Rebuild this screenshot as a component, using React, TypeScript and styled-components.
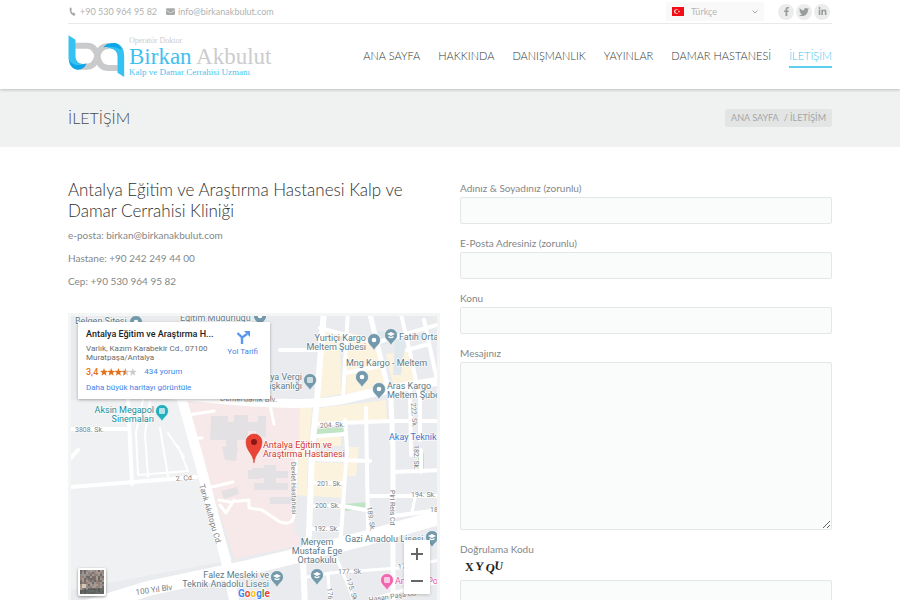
import React from "react";
import styled, { createGlobalStyle } from "styled-components";
import { FaPhoneAlt, FaEnvelope, FaFacebookF, FaTwitter, FaLinkedinIn } from "react-icons/fa";

const GlobalStyle = createGlobalStyle`
  * { box-sizing: border-box; }
  body {
    margin: 0;
    background: #fff;
    color: #848787;
    font-family: Lato, "Open Sans", sans-serif;
    font-size: 10px;
  }
  h1, h2, p { margin: 0; font-weight: 400; }
  a { color: inherit; text-decoration: none; }
`;

const Container = styled.div`
  max-width: 1300px;
  margin: 0 auto;
  padding: 0 68px;
`;

const Header = styled.header`
  position: relative;
  background: #fff;
  box-shadow: 0 1px 3px rgba(0, 0, 0, 0.22);
`;

const TopBar = styled.div`
  display: flex;
  align-items: center;
  height: 24px;
  border-bottom: 1px solid #e8e9e9;
  color: #b0b2b2;
  font-size: 9px;
`;

const Contact = styled.a`
  display: flex;
  align-items: center;
  gap: 3px;
  margin-right: 9px;
  svg { color: #a8aaaa; }
`;

const Language = styled.label`
  display: flex;
  align-items: center;
  gap: 7px;
  width: 98px;
  height: 19px;
  margin-left: auto;
  padding: 0 6px;
  background: #f9f9f9;
`;

const LanguageSelect = styled.select`
  flex: 1;
  appearance: none;
  border: 0;
  padding: 0;
  background: none;
  color: #b4b6b6;
  font: inherit;
`;

const Socials = styled.div`
  display: flex;
  gap: 2px;
  margin: 0 2px 0 14px;
`;

const SocialLink = styled.a`
  display: flex;
  align-items: center;
  justify-content: center;
  width: 16px;
  height: 16px;
  border-radius: 50%;
  background: #ebecec;
  color: #9a9d9d;
`;

const MainBar = styled.div`
  display: flex;
  align-items: center;
  justify-content: space-between;
  height: 65px;
`;

const Brand = styled.a`
  display: flex;
  align-items: center;
  gap: 4px;
  font-family: "Liberation Serif", serif;
`;

const BrandText = styled.span`
  display: flex;
  flex-direction: column;
  color: #cbccce;
`;

const BrandSmall = styled.span`
  font-size: 8px;
  line-height: 8px;
`;

const BrandName = styled.span`
  font-size: 23px;
  line-height: 23px;
  b { color: #3fc1ef; font-weight: 400; }
`;

const BrandTag = styled.span`
  color: #49c4f0;
  font-size: 9px;
  line-height: 9px;
`;

const Nav = styled.nav`
  display: flex;
  gap: 18px;
  font-size: 11px;
  font-weight: 300;
`;

const NavLink = styled.a<{ $active?: boolean }>`
  border-bottom: 2px solid ${(p) => (p.$active ? "#5fcdf0" : "transparent")};
  color: ${(p) => (p.$active ? "#45c6ee" : "#333636")};
  line-height: 20px;
`;

const TitleBand = styled.div`
  background: #f0f2f2;
`;

const TitleRow = styled.div`
  display: flex;
  align-items: center;
  justify-content: space-between;
  height: 58px;
`;

const PageTitle = styled.h1`
  color: #484b4b;
  font-size: 16px;
  font-weight: 300;
  line-height: 20px;
  padding-bottom: 1px;
`;

const Crumbs = styled.nav`
  display: flex;
  gap: 5px;
  padding: 0 6px;
  border-radius: 2px;
  background: #e3e5e5;
  color: #a3a6a6;
  font-size: 9px;
  line-height: 18px;
`;

const Columns = styled.main`
  display: grid;
  grid-template-columns: 1fr 1fr;
  gap: 20px;
  padding: 32px 0;
`;

const Heading = styled.h2`
  margin-bottom: 3px;
  color: #2e3232;
  font-size: 17px;
  font-weight: 300;
  line-height: 21px;
`;

const Line = styled.p`
  line-height: 23px;
`;

const MapFrame = styled.div`
  position: relative;
  height: 292px;
  margin-top: 20px;
  border: 3px solid #f4f5f5;
  overflow: hidden;
  font-family: Roboto, sans-serif;
`;

const MapDrawing = styled.svg`
  display: block;
  width: 100%;
  height: 100%;
  font-family: Roboto, sans-serif;
`;

const PlaceCard = styled.div`
  position: absolute;
  top: 6px;
  left: 7px;
  display: flex;
  justify-content: space-between;
  width: 192px;
  height: 77px;
  padding: 6px 12px 0 8px;
  background: #fff;
  box-shadow: 0 1px 3px rgba(0, 0, 0, 0.3);
  color: #6b6b6b;
  font-size: 8px;
  line-height: 9px;
`;

const PlaceName = styled.p`
  margin-bottom: 4px;
  color: #222;
  font-size: 9px;
  font-weight: 500;
  line-height: 12px;
  white-space: nowrap;
`;

const Rating = styled.p`
  display: flex;
  align-items: center;
  gap: 2px;
  margin: 5px 0 6px;
  color: #e7711b;
  font-size: 9px;
  font-weight: 500;
  line-height: 10px;
`;

const MapLink = styled.a`
  color: #4285e8;
  font-size: 8px;
  font-weight: 400;
`;

const ReviewLink = styled(MapLink)`
  margin-left: 5px;
`;

const Directions = styled(MapLink)`
  display: flex;
  flex-direction: column;
  align-items: center;
  gap: 3px;
  padding-top: 3px;
  white-space: nowrap;
`;

const ZoomControls = styled.div`
  position: absolute;
  right: 7px;
  bottom: 8px;
  width: 26px;
  background: #fff;
  box-shadow: 0 1px 3px rgba(0, 0, 0, 0.2);
`;

const ZoomButton = styled.button`
  display: flex;
  align-items: center;
  justify-content: center;
  width: 26px;
  height: 27px;
  padding: 0;
  border: 0;
  background: none;
`;

const Satellite = styled.button`
  position: absolute;
  left: 7px;
  bottom: 6px;
  width: 28px;
  height: 28px;
  padding: 0;
  border: 2px solid #fff;
  border-radius: 2px;
  background: #8a8380;
  box-shadow: 0 1px 3px rgba(0, 0, 0, 0.4);
  svg { display: block; width: 100%; height: 100%; }
`;

const Form = styled.form`
  display: flex;
  flex-direction: column;
  gap: 11px;
  padding-top: 1px;
`;

const Field = styled.div`
  display: flex;
  flex-direction: column;
`;

const Label = styled.label`
  line-height: 17px;
`;

const Input = styled.input`
  width: 100%;
  height: 27px;
  padding: 0 8px;
  border: 1px solid #e4e7e7;
  border-radius: 2px;
  background: #fafcfb;
  font: inherit;
`;

const TextArea = styled.textarea`
  width: 100%;
  height: 168px;
  padding: 8px;
  border: 1px solid #e4e7e7;
  border-radius: 2px;
  background: #fafcfb;
  font: inherit;
`;

const captchaLetters = [
  { ch: "X", x: 5, y: 13, r: 0 },
  { ch: "Y", x: 15, y: 12, r: 3 },
  { ch: "Q", x: 25, y: 13, r: 10 },
  { ch: "U", x: 34, y: 11, r: 8 },
];

const menu = ["ANA SAYFA", "HAKKINDA", "DANIŞMANLIK", "YAYINLAR", "DAMAR HASTANESİ", "İLETİŞİM"];

const Logo = () => (
  <svg width="57" height="43" viewBox="25 105 170 129" fill="none">
    <path d="M46 137H82C102 137 110 154 113 170C116 188 124 204 145 204H174" stroke="#c9cacc" strokeWidth="18" />
    <path d="M58 200H80C100 200 108 186 112 170C116 152 126 138 146 138" stroke="#c9cacc" strokeWidth="18" />
    <path d="M26 106L47 119V168C47 186 60 193 76 193C70 204 60 209 50 208C34 205 26 190 26 170Z" fill="#35c2f3" />
    <path d="M28 182C42 198 62 198 80 190C76 203 66 209 54 209C40 207 31 198 28 182Z" fill="#0ea5e6" />
    <path d="M193 231L173 218V170C173 152 160 145 142 145C148 133 158 129 168 130C185 133 193 148 193 168Z" fill="#35c2f3" />
    <path d="M130 142C140 130 154 127 168 130C176 133 182 140 186 150C170 140 150 138 130 142Z" fill="#0ea5e6" />
  </svg>
);

const Flag = () => (
  <svg width="12" height="9" viewBox="0 0 12 9">
    <rect width="12" height="9" fill="#f30d14" />
    <circle cx="4.4" cy="4.5" r="2.3" fill="#fff" />
    <circle cx="5" cy="4.5" r="1.8" fill="#f30d14" />
    <path d="M6 4.5L7.6 3.8V5.2Z" fill="#fff" />
  </svg>
);

type PinProps = { x: number; y: number; color?: string; kind?: "dot" | "school" | "square" };

const Pin = ({ x, y, color = "#7399ab", kind = "dot" }: PinProps) => (
  <g transform={`translate(${x} ${y})`}>
    <path d="M0 11C-1.5 6-6.5 5-6.5 0A6.5 6.5 0 0 1 6.5 0C6.5 5 1.5 6 0 11Z" fill={color} stroke="#fff" strokeWidth=".7" />
    {kind === "dot" && <circle r="2.3" fill="#fff" />}
    {kind === "school" && <path d="M-4-1L0-3L4-1L0 1ZM-2.5 1V2.5Q0 4 2.5 2.5V1L0 2Z" fill="#fff" />}
    {kind === "square" && <path d="M-3-3H3V3H-3ZM-1-2V2M1-2V2" fill="#fff" stroke={color} strokeWidth=".7" />}
  </g>
);

type LabelSpec = { t: string; x: number; y: number; a?: "start" | "middle" | "end"; c?: string; s?: number; r?: number };

const places: LabelSpec[] = [
  { t: "Belgen Sitesi", x: 75, y: 324 },
  { t: "Eğitim Müdürlüğü", x: 180, y: 321 },
  { t: "Yurtiçi Kargo", x: 366, y: 341, a: "end" },
  { t: "Meltem Şubesi", x: 366, y: 350, a: "end" },
  { t: "Fatih Ortaokulu", x: 399, y: 340 },
  { t: "Mng Kargo - Meltem", x: 346, y: 366 },
  { t: "Aras Kargo", x: 387, y: 389 },
  { t: "Meltem Şubesi", x: 387, y: 398 },
  { t: "Antalya Vergi", x: 302, y: 380, a: "end" },
  { t: "Dairesi Başkanlığı", x: 302, y: 389, a: "end" },
  { t: "Aksin Megapol", x: 154, y: 413, a: "end", c: "#168e9b" },
  { t: "Sinemaları", x: 154, y: 422, a: "end", c: "#168e9b" },
  { t: "Akay Teknik", x: 389, y: 440, c: "#4573c9" },
  { t: "Antalya Eğitim ve", x: 263, y: 448, c: "#d23a33" },
  { t: "Araştırma Hastanesi", x: 263, y: 457, c: "#d23a33" },
  { t: "Gazi Anadolu Lisesi", x: 345, y: 542 },
  { t: "Meryem", x: 317, y: 545, a: "middle" },
  { t: "Mustafa Ege", x: 317, y: 554, a: "middle" },
  { t: "Ortaokulu", x: 317, y: 563, a: "middle" },
  { t: "Falez Mesleki ve", x: 269, y: 578, a: "end" },
  { t: "Teknik Anadolu Lisesi", x: 269, y: 587, a: "end" },
  { t: "Antalya Port", x: 395, y: 584, c: "#e85aa5" },
];

const streets: LabelSpec[] = [
  { t: "Denterdanik Blv.", x: 220, y: 401, s: 8, r: 1 },
  { t: "3808. Sk.", x: 75, y: 432 },
  { t: "2. Cd.", x: 176, y: 481, r: -4 },
  { t: "204. Sk.", x: 320, y: 428, r: -3 },
  { t: "201. Sk.", x: 317, y: 486 },
  { t: "200. Sk.", x: 315, y: 508 },
  { t: "192. Sk.", x: 314, y: 531 },
  { t: "194. Sk.", x: 411, y: 497 },
  { t: "187. Sk.", x: 430, y: 512 },
  { t: "177. Sk.", x: 338, y: 574, r: -1 },
  { t: "174. Sk.", x: 398, y: 569, r: -4 },
  { t: "222. Sk.", x: 411, y: 403, r: 86 },
  { t: "182. Sk.", x: 414, y: 445, r: 90 },
  { t: "189. Sk.", x: 367, y: 507, r: 82 },
  { t: "175. Sk.", x: 346, y: 579, r: 72 },
  { t: "176. Sk.", x: 327, y: 588, r: 84 },
  { t: "Piri Reis Cd", x: 390, y: 490, r: 90 },
  { t: "Devlet Hastanesi", x: 291, y: 462, r: 89 },
  { t: "Hasan Paşa Cd.", x: 369, y: 602, r: -8 },
  { t: "Tarık Akıltopu Cd.", x: 199, y: 485, s: 8, r: 74 },
  { t: "100 Yıl Blv", x: 136, y: 595, s: 8, r: -8 },
];

const MapText = ({ items, size, color }: { items: LabelSpec[]; size: number; color: string }) => (
  <g stroke="#fff" strokeOpacity=".8" strokeWidth="1.5" paintOrder="stroke" strokeLinejoin="round">
    {items.map((l) => (
      <text
        key={l.t + l.x + l.y}
        fontSize={l.s ?? size}
        fill={l.c ?? color}
        textAnchor={l.a ?? "start"}
        transform={`translate(${l.x} ${l.y}) rotate(${l.r ?? 0})`}
      >
        {l.t}
      </text>
    ))}
  </g>
);

const CityMap = () => (
  <MapDrawing viewBox="71 316 366 286" preserveAspectRatio="xMidYMid slice" role="img" aria-label="Harita">
    <rect x="-200" y="200" width="1000" height="600" fill="#e9ebee" />
    <path d="M71 400H183L232 560L71 590Z" fill="#eff1f2" />
    <path d="M183 402L307 403L301 446L294 530L304 544L235 559Z" fill="#f7e9e9" />
    <g fill="#fbf3de">
      <path d="M300 406L312 406L308 455L307 496L297 495L299 455Z" />
      <path d="M324 328L340 333L341 394L319 398Z" />
      <path d="M348 332L375 340L388 388L346 394Z" />
      <path d="M386 354L408 350L414 380L394 388Z" />
      <path d="M319 408L386 400L387 419L318 424Z" />
      <path d="M318 434L341 433L341 446L317 446Z" />
      <path d="M313 462L344 463L342 498L312 496Z" />
      <path d="M349 447L359 447L356 476L348 476Z" />
      <path d="M410 381L437 377V384L411 389Z" />
    </g>
    <g fill="#bfe5c4">
      <path d="M317 429L345 426V433L316 435Z" />
      <path d="M345 504L367 502L365 508L345 511Z" />
      <path d="M418 453H424V469H418Z" />
    </g>
    <path d="M395 340H406L401 375H393ZM386 345L375 330L391 333Z" fill="#dfe9ed" />
    <g fill="#e3e1e3">
      <path d="M211 416H228V422H234V415H248V422H258V416H266V437H256V431H248V440H237V448H226V440H210Z" />
      <path d="M222 447H238L236 461L225 460Z" />
      <path d="M252 468H264V465H276V471H288V478H276V483H288V490H254V483H264V478H252Z" />
      <path d="M248 470H260V479H248ZM270 497H293V504H270Z" />
      <path d="M221 491L237 487L239 494L224 499Z" />
    </g>
    <g fill="none" stroke="#fff" strokeLinecap="round" strokeLinejoin="round">
      <g strokeWidth="9">
        <path d="M150 393L240 401Q315 407 350 398T440 381" />
        <path d="M181 396L199 460L227 565L236 610" strokeWidth="10" />
        <path d="M85 608L150 588L250 567L300 555L370 537L440 517" strokeWidth="15" />
      </g>
      <g strokeWidth="6">
        <path d="M324 310L317 400L312 450L309 535L303 560L305 605" />
        <path d="M369 310L386 380L391 400L393 450L393 605" strokeWidth="5" />
      </g>
      <g strokeWidth="4">
        <path d="M60 488L196 477" />
        <path d="M348 310L343 398M345 420L347 450L343 505L340 550" />
        <path d="M320 328L375 343L440 324M280 350H317M345 373L380 366" />
        <path d="M400 310L410 352L420 400V440M424 320L437 380M407 350L429 344" />
        <path d="M316 424L390 421H440M312 459L370 461M366 408L368 530M318 436L345 434" />
        <path d="M370 496H440M393 472L440 470M393 516L440 510M410 390L411 455M421 450V472" />
        <path d="M312 483H343M311 506H343L366 510M310 529H340" />
        <path d="M128 400L132 484M60 429H127M71 458L78 450" />
        <path d="M143 400L136 432L138 475M150 402L145 434L148 477M160 428L168 476M178 446L188 471L138 475M168 433L184 457" strokeWidth="2" />
        <path d="M297 450L294 515Q293 526 280 522L262 510L249 508V500L230 502L219 500M212 487L233 482M220 505L226 513L234 500" strokeWidth="3" />
        <path d="M270 405L274 424M188 415L214 411M192 438L202 438" strokeWidth="3" />
        <path d="M302 578L330 573L398 568L440 560M333 550L350 590L355 605M328 574L330 605M370 600L410 588L440 582M415 498L412 512" strokeWidth="3" />
      </g>
    </g>
    <MapText items={streets} size={7} color="#7b8083" />
    <MapText items={places} size={9} color="#5d7b89" />
    <Pin x={136} y={322} />
    <Pin x={260} y={316} />
    <Pin x={374} y={340} />
    <Pin x={391} y={335} kind="school" />
    <Pin x={362} y={377} />
    <Pin x={379} y={389} />
    <Pin x={310} y={380} kind="square" />
    <Pin x={162} y={411} kind="square" color="#23b0bd" />
    <Pin x={432} y={537} kind="school" />
    <Pin x={317} y={575} kind="school" />
    <Pin x={277} y={577} kind="school" />
    <Pin x={387} y={580} kind="square" color="#f067b0" />
    <path d="M254 463C253 453 246 451 246 442A8 8 0 0 1 262 442C262 451 255 453 254 463Z" fill="#ea4335" stroke="#cf2e22" strokeWidth=".5" />
    <circle cx="254" cy="442" r="3" fill="#8c1611" />
    <text x="238" y="597" fontSize="10" fontWeight="700" stroke="#fff" strokeWidth="1.5" paintOrder="stroke">
      <tspan fill="#4285f4">G</tspan>
      <tspan fill="#ea4335">o</tspan>
      <tspan fill="#fbbc05">o</tspan>
      <tspan fill="#4285f4">g</tspan>
      <tspan fill="#34a853">l</tspan>
      <tspan fill="#ea4335">e</tspan>
    </text>
  </MapDrawing>
);

const starPath = "M4 0L5 2.8L8 3L5.7 4.8L6.5 7.8L4 6.1L1.5 7.8L2.3 4.8L0 3L3 2.8Z";

const Stars = () => (
  <svg width="37" height="8" viewBox="0 0 37 8">
    {[0, 1, 2, 3, 4].map((i) => (
      <path key={i} d={starPath} transform={`translate(${i * 7.2} 0)`} fill={i < 3 ? "#e7711b" : "#ccc"} />
    ))}
    <path d="M4 0V6.1L1.5 7.8L2.3 4.8L0 3L3 2.8Z" transform="translate(21.6 0)" fill="#e7711b" />
  </svg>
);

const satelliteTones = ["#6f6a6b", "#a0958f", "#7d6f68", "#8f8a8c", "#a79b92", "#6a6a69", "#94827a"];

const Tiles = () => (
  <svg viewBox="0 0 12 12" preserveAspectRatio="none">
    {Array.from({ length: 144 }, (_, i) => (
      <rect
        key={i}
        x={i % 12}
        y={Math.floor(i / 12)}
        width="1.1"
        height="1.1"
        fill={satelliteTones[(i * 5 + (i % 12) * (i % 5) + 3 * Math.floor(i / 7)) % 7]}
      />
    ))}
    <path d="M0 10L12 9V12H0Z" fill="#4c5552" opacity=".7" />
    <path d="M1 7H3V9H1Z" fill="#d9c9ac" />
  </svg>
);

export default function App() {
  return (
    <>
      <GlobalStyle />
      <Header>
        <Container>
          <TopBar>
            <Contact href="tel:+905309649582">
              <svg width="9" height="9" viewBox="0 0 9 9" fill="currentColor" aria-hidden="true">
                <path d="M2.6 0.3L4.2 2.4L3.2 3.3Q3.6 5 4.8 6L6 5.6L7.6 7.6Q6.9 8.9 5.6 8.7Q2 7.4 1.6 2.6Q1.5 .7 2.6 .3Z" />
              </svg>
              +90 530 964 95 82
            </Contact>
            <Contact href="mailto:info@birkanakbulut.com">
              <FaEnvelope size={9} />
              info@birkanakbulut.com
            </Contact>
            <Language>
              <Flag />
              <LanguageSelect aria-label="Dil" defaultValue="tr">
                <option value="tr">Türkçe</option>
              </LanguageSelect>
              <svg width="6" height="4" viewBox="0 0 6 4" fill="none">
                <path d="M.5.5L3 3L5.5.5" stroke="#a5a7a7" />
              </svg>
            </Language>
            <Socials>
              <SocialLink href="#" aria-label="Facebook"><FaFacebookF size={9} /></SocialLink>
              <SocialLink href="#" aria-label="Twitter"><FaTwitter size={10} /></SocialLink>
              <SocialLink href="#" aria-label="LinkedIn"><FaLinkedinIn size={9} /></SocialLink>
            </Socials>
          </TopBar>
          <MainBar>
            <Brand href="#">
              <Logo />
              <BrandText>
                <BrandSmall>Operatör Doktor</BrandSmall>
                <BrandName><b>Birkan</b> Akbulut</BrandName>
                <BrandTag>Kalp ve Damar Cerrahisi Uzmanı</BrandTag>
              </BrandText>
            </Brand>
            <Nav>
              {menu.map((m) => (
                <NavLink key={m} href="#" $active={m === "İLETİŞİM"}>{m}</NavLink>
              ))}
            </Nav>
          </MainBar>
        </Container>
      </Header>
      <TitleBand>
        <Container>
          <TitleRow>
            <PageTitle>İLETİŞİM</PageTitle>
            <Crumbs>
              <a href="#">ANA SAYFA</a>
              <span>/ İLETİŞİM</span>
            </Crumbs>
          </TitleRow>
        </Container>
      </TitleBand>
      <Container>
        <Columns>
          <section>
            <Heading>Antalya Eğitim ve Araştırma Hastanesi Kalp ve Damar Cerrahisi Kliniği</Heading>
            <Line>e-posta: birkan@birkanakbulut.com</Line>
            <Line>Hastane: +90 242 249 44 00</Line>
            <Line>Cep: +90 530 964 95 82</Line>
            <MapFrame>
              <CityMap />
              <PlaceCard>
                <div>
                  <PlaceName>Antalya Eğitim ve Araştırma H...</PlaceName>
                  <p>Varlık, Kazım Karabekir Cd., 07100<br />Muratpaşa/Antalya</p>
                  <Rating>
                    3,4 <Stars />
                    <ReviewLink href="#">434 yorum</ReviewLink>
                  </Rating>
                  <MapLink href="#">Daha büyük haritayı görüntüle</MapLink>
                </div>
                <Directions href="#">
                  <svg width="14" height="13" viewBox="0 0 14 13" fill="none" stroke="#5b97ee" strokeWidth="2.4">
                    <path d="M1.5 2L6 6.5V13M6 8V6.5L11 3" />
                    <path d="M8 0H14V6Z" fill="#5b97ee" stroke="none" />
                  </svg>
                  Yol Tarifi
                </Directions>
              </PlaceCard>
              <Satellite type="button" aria-label="Uydu görünümü"><Tiles /></Satellite>
              <ZoomControls>
                <ZoomButton type="button" aria-label="Yakınlaştır">
                  <svg width="12" height="12" viewBox="0 0 12 12" stroke="#666" strokeWidth="2"><path d="M0 6H12M6 0V12" /></svg>
                </ZoomButton>
                <ZoomButton type="button" aria-label="Uzaklaştır">
                  <svg width="12" height="12" viewBox="0 0 12 12" stroke="#666" strokeWidth="2"><path d="M0 6H12" /></svg>
                </ZoomButton>
              </ZoomControls>
            </MapFrame>
          </section>
          <Form>
            <Field>
              <Label htmlFor="name">Adınız &amp; Soyadınız (zorunlu)</Label>
              <Input id="name" type="text" />
            </Field>
            <Field>
              <Label htmlFor="email">E-Posta Adresiniz (zorunlu)</Label>
              <Input id="email" type="email" />
            </Field>
            <Field>
              <Label htmlFor="subject">Konu</Label>
              <Input id="subject" type="text" />
            </Field>
            <Field>
              <Label htmlFor="message">Mesajınız</Label>
              <TextArea id="message" />
            </Field>
            <Field>
              <Label htmlFor="code">Doğrulama Kodu</Label>
              <svg width="48" height="22" fontFamily="Liberation Serif, serif" fontSize="12" fontWeight="700" fill="#222">
                {captchaLetters.map((l) => (
                  <text key={l.ch} transform={`translate(${l.x} ${l.y}) rotate(${l.r})`}>{l.ch}</text>
                ))}
              </svg>
              <Input id="code" type="text" />
            </Field>
          </Form>
        </Columns>
      </Container>
    </>
  );
}
